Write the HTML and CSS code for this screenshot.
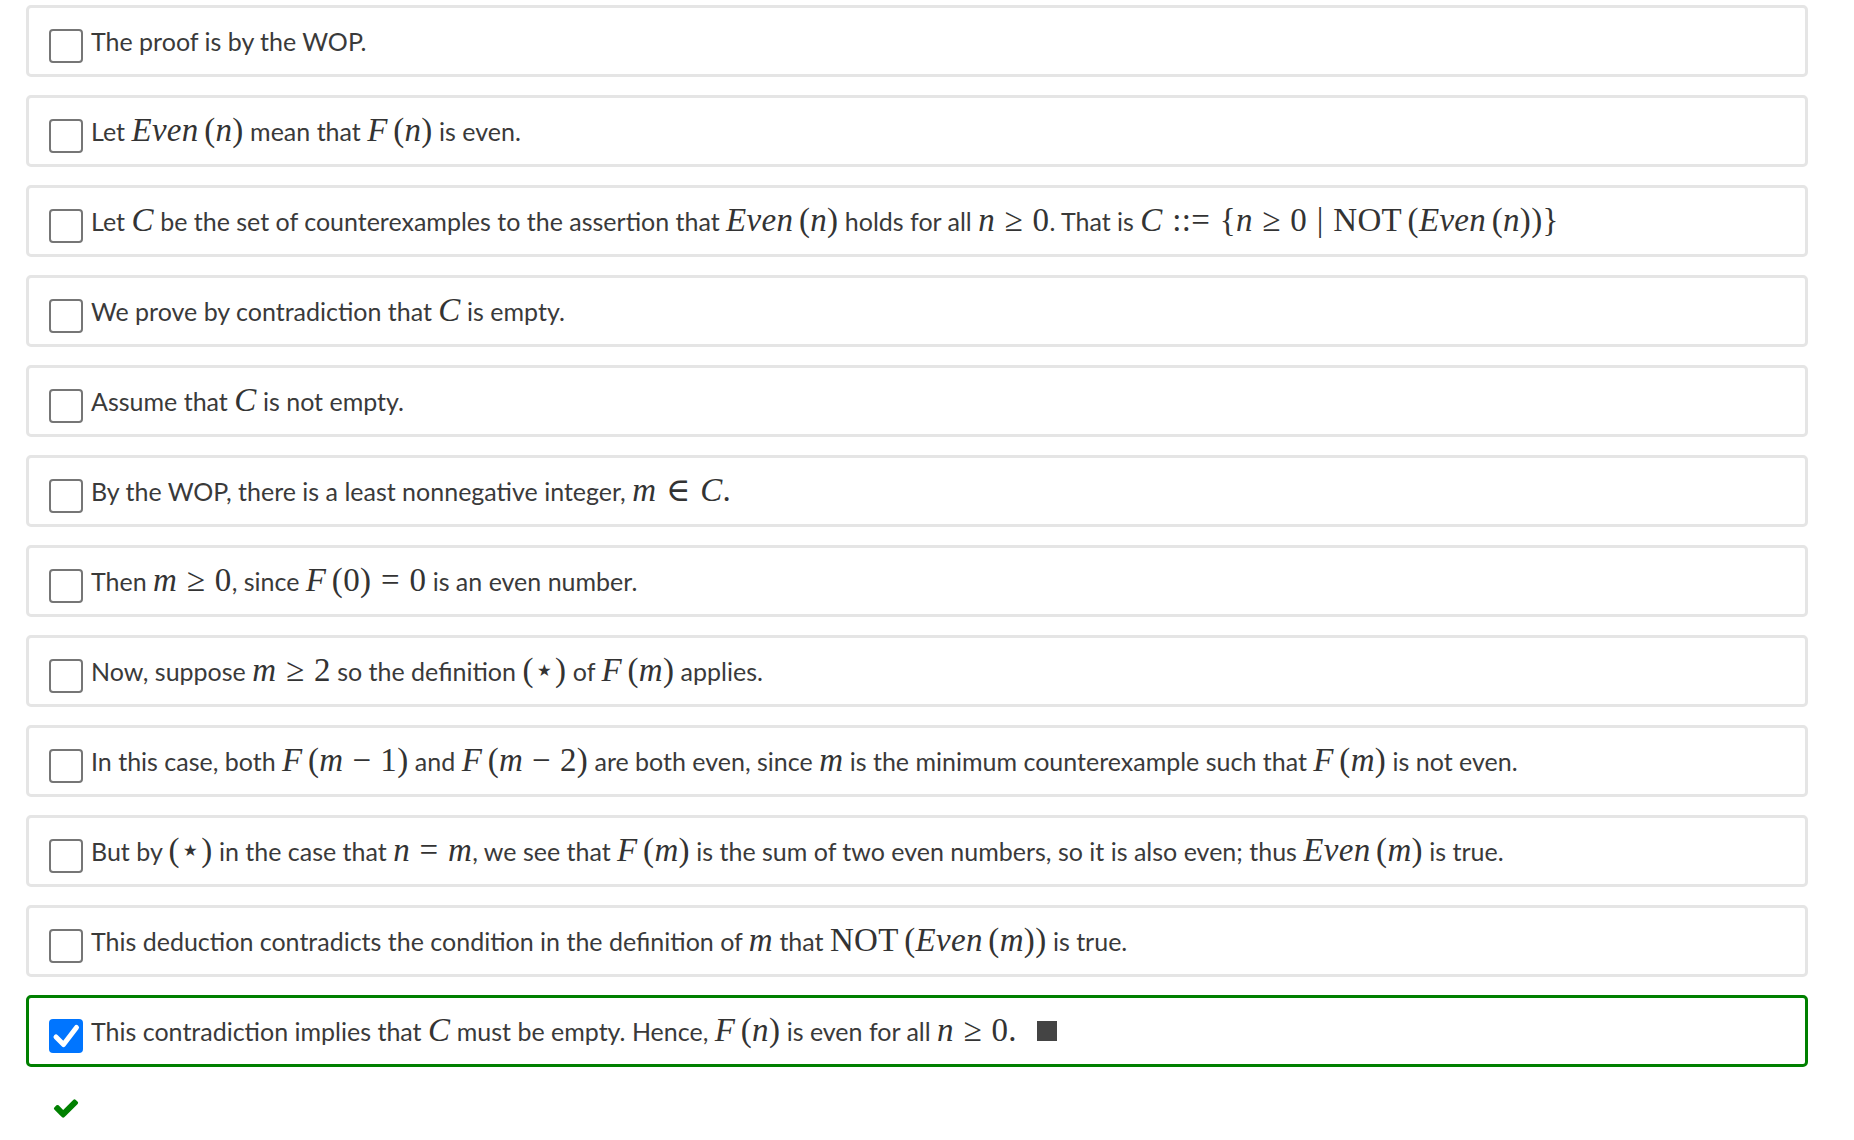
FILE: index.html
```html
<!DOCTYPE html>
<html>
<head>
<meta charset="utf-8">
<link rel="stylesheet" href="styles.css">
</head>
<body>
<div class="page">
  <div class="list">
    <div class="item"><span class="cb"></span><span class="txt">The proof is by the WOP.</span></div>
    <div class="item"><span class="cb"></span><span class="txt">Let <span class="m"><i>Even</i><span class="lp">(</span><i>n</i>)</span> mean that <span class="m"><i>F</i><span class="lp">(</span><i>n</i>)</span> is even.</span></div>
    <div class="item"><span class="cb"></span><span class="txt">Let <span class="m"><i>C</i></span> be the set of counterexamples to the assertion that <span class="m"><i>Even</i><span class="lp">(</span><i>n</i>)</span> holds for all <span class="m"><i>n</i><span class="rel">≥</span>0</span>. That is <span class="m"><i>C</i><span class="rel">::=</span>{<i>n</i><span class="rel">≥</span>0<span class="rel">|</span>NOT<span class="lp">(</span><i>Even</i><span class="lp">(</span><i>n</i>))}</span></span></div>
    <div class="item"><span class="cb"></span><span class="txt">We prove by contradiction that <span class="m"><i>C</i></span> is empty.</span></div>
    <div class="item"><span class="cb"></span><span class="txt">Assume that <span class="m"><i>C</i></span> is not empty.</span></div>
    <div class="item"><span class="cb"></span><span class="txt">By the WOP, there is a least nonnegative integer, <span class="m"><i>m</i><span class="rel">∈</span><i>C</i>.</span></span></div>
    <div class="item"><span class="cb"></span><span class="txt">Then <span class="m"><i>m</i><span class="rel">≥</span>0</span>, since <span class="m"><i>F</i><span class="lp">(</span>0)<span class="rel">=</span>0</span> is an even number.</span></div>
    <div class="item"><span class="cb"></span><span class="txt">Now, suppose <span class="m"><i>m</i><span class="rel">≥</span>2</span> so the definition <span class="m">(<span class="star">⋆</span>)</span> of <span class="m"><i>F</i><span class="lp">(</span><i>m</i>)</span> applies.</span></div>
    <div class="item"><span class="cb"></span><span class="txt">In this case, both <span class="m"><i>F</i><span class="lp">(</span><i>m</i><span class="bin">−</span>1)</span> and <span class="m"><i>F</i><span class="lp">(</span><i>m</i><span class="bin">−</span>2)</span> are both even, since <span class="m"><i>m</i></span> is the minimum counterexample such that <span class="m"><i>F</i><span class="lp">(</span><i>m</i>)</span> is not even.</span></div>
    <div class="item"><span class="cb"></span><span class="txt">But by <span class="m">(<span class="star">⋆</span>)</span> in the case that <span class="m"><i>n</i><span class="rel">=</span><i>m</i></span>, we see that <span class="m"><i>F</i><span class="lp">(</span><i>m</i>)</span> is the sum of two even numbers, so it is also even; thus <span class="m"><i>Even</i><span class="lp">(</span><i>m</i>)</span> is true.</span></div>
    <div class="item"><span class="cb"></span><span class="txt">This deduction contradicts the condition in the definition of <span class="m"><i>m</i></span> that <span class="m">NOT<span class="lp">(</span><i>Even</i><span class="lp">(</span><i>m</i>))</span> is true.</span></div>
    <div class="item correct"><span class="cb checked"><svg viewBox="0 0 34 34" width="34" height="34"><path d="M7 18 L14.5 25.5 L27.5 8.5" fill="none" stroke="#fff" stroke-width="5" stroke-linecap="round" stroke-linejoin="round"/></svg></span><span class="txt">This contradiction implies that <span class="m"><i>C</i></span> must be empty. Hence, <span class="m"><i>F</i><span class="lp">(</span><i>n</i>)</span> is even for all <span class="m"><i>n</i><span class="rel">≥</span>0.</span><span class="qed"></span></span></div>
  </div>
  <div class="result"><svg viewBox="0 0 1792 1792" width="28" height="28"><path fill="#008000" d="M1671 566q0 40-28 68l-724 724-136 136q-28 28-68 28t-68-28l-136-136-362-362q-28-28-28-68t28-68l136-136q28-28 68-28t68 28l294 295 656-657q28-28 68-28t68 28l136 136q28 28 28 68z"/></svg></div>
</div>
</body>
</html>
```

FILE: styles.css
```css
html, body {
  margin: 0;
  padding: 0;
  background: #fff;
}
.page {
  padding: 5px 46px 0 26px;
  font-family: Lato, "Open Sans", sans-serif;
  color: #3a3a3a;
}
.list {
  display: flex;
  flex-direction: column;
  gap: 18px;
}
.item {
  box-sizing: border-box;
  height: 72px;
  border: 3px solid #e5e5e5;
  border-radius: 5px;
  padding: 13px 20px 0 20px;
  display: flex;
  align-items: flex-start;
  white-space: nowrap;
}
.item.correct {
  border-color: #008000;
}
.cb {
  box-sizing: border-box;
  flex: none;
  width: 34px;
  height: 34px;
  margin-top: 8px;
  border: 2px solid #767676;
  border-radius: 4px;
  background: #fff;
}
.cb.checked {
  border: none;
  background: #0075ff;
}
.cb svg {
  display: block;
}
.txt {
  margin-left: 8px;
  font-size: 25px;
  line-height: 40px;
}
.m {
  font-family: "Liberation Serif", "DejaVu Serif", serif;
  font-size: 33px;
  line-height: 1;
  letter-spacing: 0.01em;
  color: #333;
}
.m i {
  font-style: italic;
}
.lp {
  margin-left: 0.167em;
}
.rel {
  margin: 0 0.29em;
}
.bin {
  margin: 0 0.27em;
}
.star {
  font-family: "DejaVu Serif", serif;
  font-size: 1em;
}
.qed {
  display: inline-block;
  width: 20px;
  height: 20px;
  background: #444;
  margin-left: 20px;
}
.result {
  margin-top: 27px;
  padding-left: 26px;
  line-height: 0;
}
```
